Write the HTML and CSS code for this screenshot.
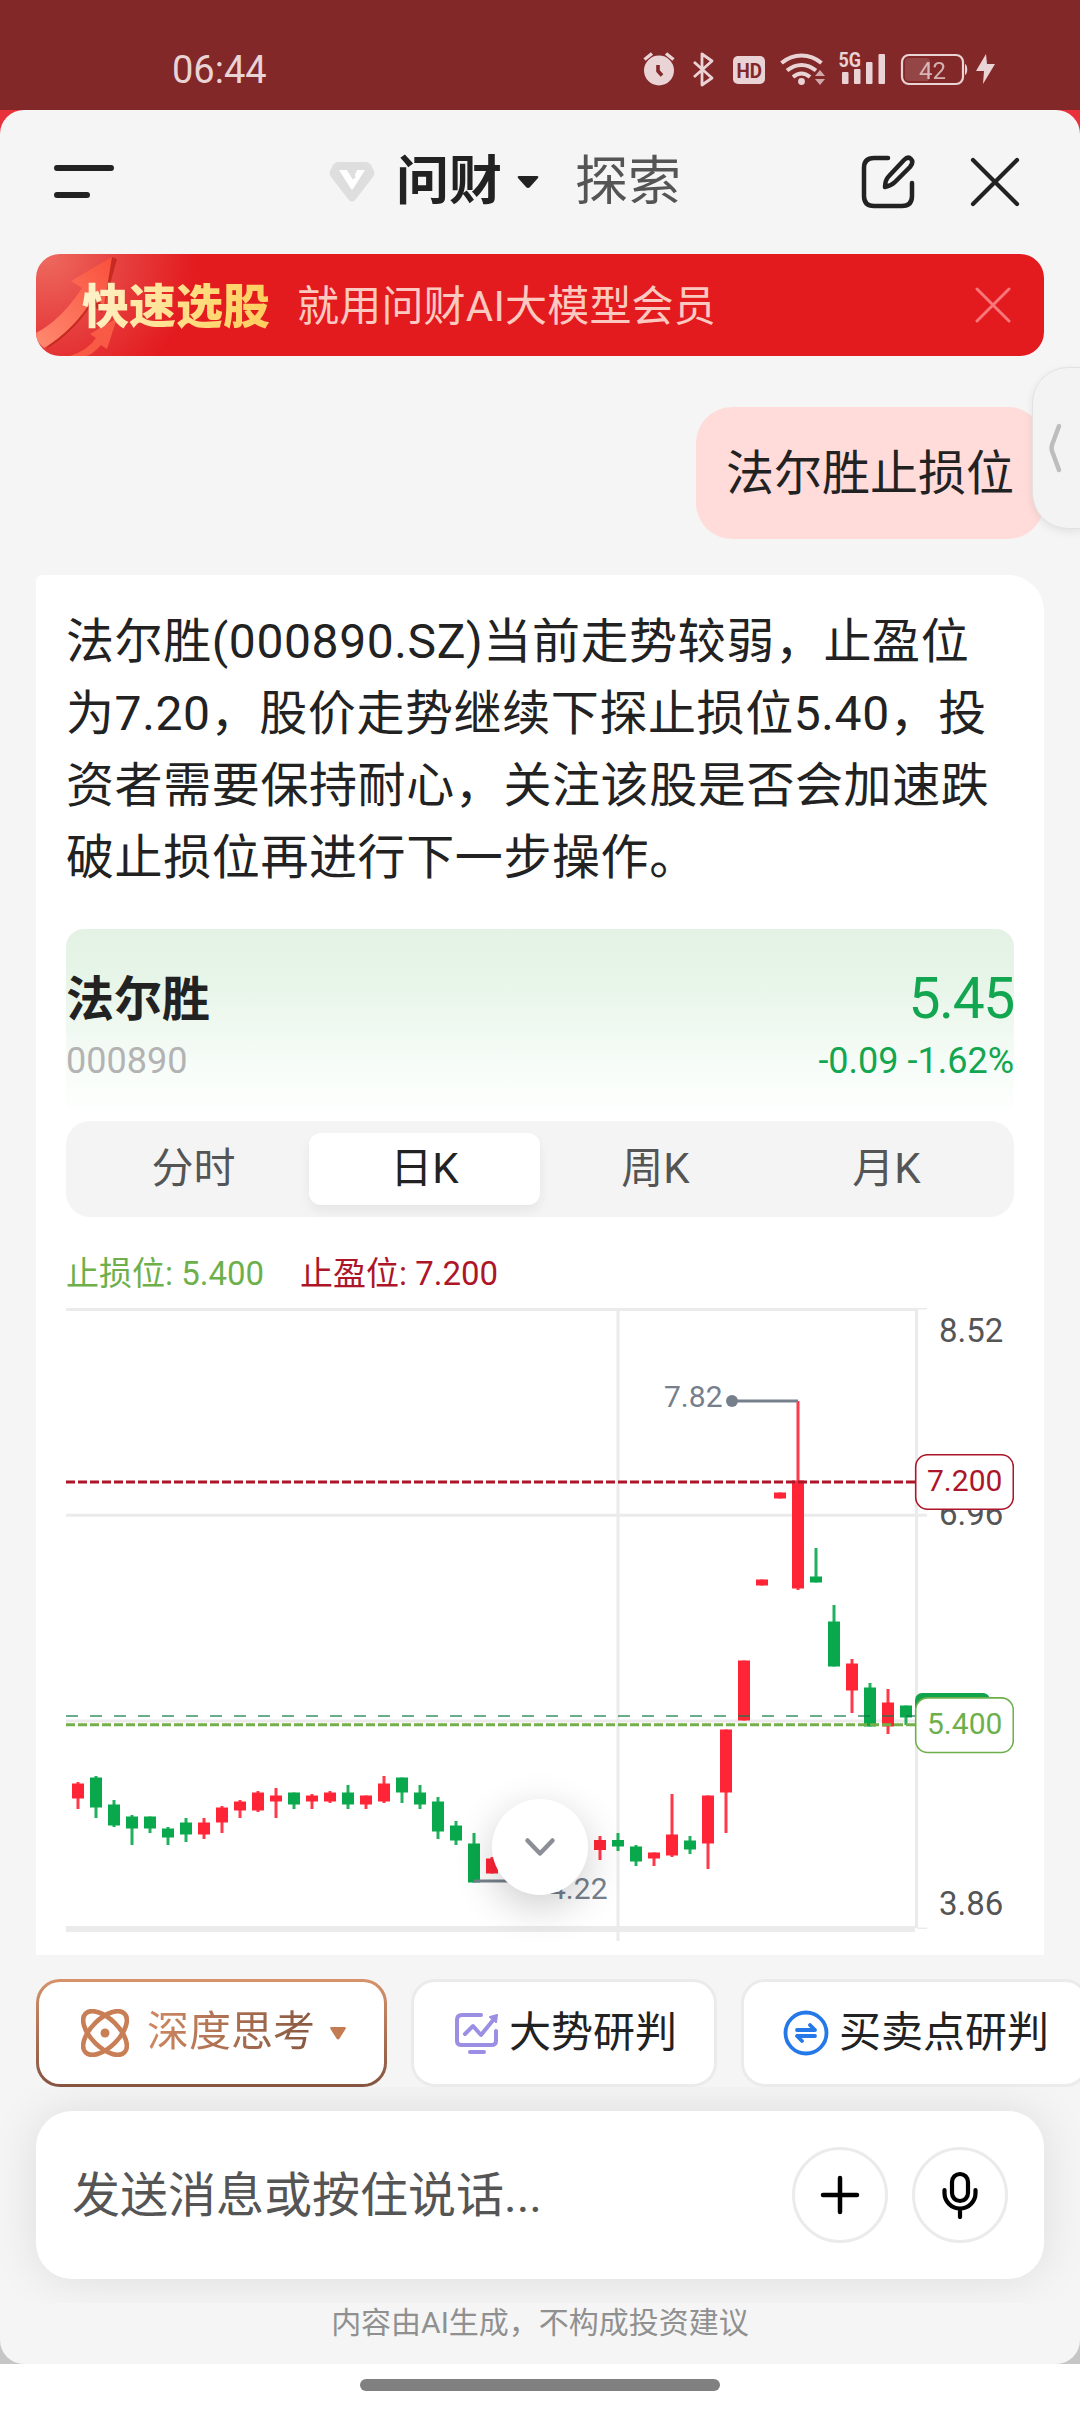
FILE: index.html
```html
<!DOCTYPE html>
<html lang="zh-CN">
<head>
  <meta charset="UTF-8" />
  <title>问财</title>
  <link rel="stylesheet" href="styles.css">
</head>
<body>
  <header class="status-bar">
    <span class="time">06:44</span>
    <!-- alarm, bluetooth, HD, wifi, 5G, battery, charging -->
    <svg class="status-icons" viewBox="640 48 360 40" width="360" height="40">
      <g fill="#ead3d4">
        <circle cx="659" cy="70.500" r="15" />
        <path d="M658 65v6l4 4.500" stroke="#822828" stroke-width="3.600" fill="none" />
        <path d="M644.500 59.500l7.500-6M673.500 59.500l-7.500-6" stroke="#ead3d4" stroke-width="3.400" />
        <path d="M694 62l18 16-10 7V54l10 7-18 16" stroke="#ead3d4" stroke-width="2.800" fill="none" stroke-linejoin="round" />
        <rect x="733" y="56" width="32" height="28" rx="5" />
        <path d="M781.500 63c12-10 28-10 40 0M787 70.500c9-7.500 20-7.500 29 0M793 77c5.500-4.500 11.500-4.500 17 0" stroke="#ead3d4" stroke-width="4" fill="none" />
        <circle cx="801.500" cy="81.500" r="3.400" />
        <path d="M815 76l5-6 5 6zM815 79l5 6 5-6z" opacity=".75" />
        <rect x="842" y="72" width="6.500" height="12" rx="1" />
        <rect x="854" y="69" width="6.500" height="15" rx="1" />
        <rect x="866" y="62" width="6.500" height="22" rx="1" />
        <rect x="878.500" y="54" width="6.500" height="30" rx="1" />
        <rect x="905" y="58" width="25" height="23" rx="4" opacity=".18" />
        <rect x="902" y="55" width="61" height="29" rx="7" fill="none" stroke="#ead3d4" stroke-width="2.200" />
        <path d="M965 64c3 1 3 10 0 11z" />
        <path d="M986 54l-10 17h8l-1 13 12-20h-8z" />
        <text x="838.500" y="67" class="net" textLength="22.500" lengthAdjust="spacingAndGlyphs">5G</text>
        <text x="919" y="79" class="battery">42</text>
      </g>
      <text x="736.500" y="78" class="hd" textLength="25.500" lengthAdjust="spacingAndGlyphs">HD</text>
    </svg>
  </header>

  <main class="panel">
    <nav class="top-nav">
      <svg class="menu" width="60" height="36" viewBox="0 0 60 36" stroke="#222" stroke-width="6" stroke-linecap="round">
        <path d="M3 4h54M3 31h30" />
      </svg>
      <div class="nav-tabs">
        <svg width="46" height="40" viewBox="0 0 46 40">
          <path d="M9 0h28q3 0 5 3l3 6q1 3-1 6L27 37q-4 5-8 0L2 15q-2-3-1-6l3-6q2-3 5-3z" fill="#dedede" />
          <path d="M10 8h8l6 10 4-10h8L24 27q-1 1-2 0z" fill="#fff" />
          <path d="M21 8l5 8" stroke="#dedede" stroke-width="2" />
        </svg>
        <span class="nav-current">问财</span>
        <svg class="nav-caret" width="22" height="14" viewBox="0 0 22 14"><path d="M2 1h18q2 0 1 2L13 12q-2 2-4 0L1 3Q0 1 2 1z" fill="#222" /></svg>
        <span class="nav-other">探索</span>
      </div>
      <svg class="edit" width="56" height="56" viewBox="0 0 56 56" fill="none" stroke="#222" stroke-width="4.500" stroke-linecap="round" stroke-linejoin="round">
        <path d="M28 4H14Q4 4 4 14v28q0 10 10 10h28q10 0 10-10V29" />
        <path d="M25 33c0-5 1-8 4-11L44 6q4-4 7-1t-1 8L35 28c-3 3-5 4-10 5z" />
      </svg>
      <svg class="close" width="50" height="50" viewBox="0 0 50 50" stroke="#222" stroke-width="4.200" stroke-linecap="round">
        <path d="M3 3l44 44M47 3L3 47" />
      </svg>
    </nav>

    <section class="banner">
      <svg class="banner-arrow" width="110" height="102" viewBox="0 0 110 102">
        <defs>
          <linearGradient id="arrow" x1="0" y1="1" x2="1" y2="0">
            <stop offset="0" stop-color="#ff8a70" />
            <stop offset="1" stop-color="#f9503c" />
          </linearGradient>
        </defs>
        <path d="M10 95Q36 80 56 50l10 9 15-54-5-2z" fill="#c62a20" />
        <path d="M0 79Q25 66 46 34L35 27 76 3 68 52 58 43Q38 76 8 94L0 86z" fill="url(#arrow)" />
        <path d="M34 102Q52 96 60 84l-6-4 27-16-10 31-6-4Q56 101 50 102z" fill="#f95a45" />
      </svg>
      <strong class="banner-title">快速选股</strong>
      <span class="banner-text">就用问财AI大模型会员</span>
      <svg class="banner-close" width="36" height="36" viewBox="0 0 36 36" stroke="#f8777a" stroke-width="3" stroke-linecap="round">
        <path d="M2 2l32 32M34 2L2 34" />
      </svg>
    </section>

    <div class="question">法尔胜止损位</div>

    <article class="answer">
      <p class="answer-text">法尔胜(000890.SZ)当前走势较弱，止盈位<br>为7.20，股价走势继续下探止损位5.40，投<br>资者需要保持耐心，关注该股是否会加速跌<br>破止损位再进行下一步操作。</p>

      <div class="stock">
        <div class="stock-row">
          <strong class="stock-name">法尔胜</strong>
          <span class="stock-price">5.45</span>
        </div>
        <div class="stock-row">
          <span class="stock-code">000890</span>
          <span class="stock-change">-0.09 -1.62%</span>
        </div>
      </div>

      <div class="periods">
        <span>分时</span>
        <span class="active">日K</span>
        <span>周K</span>
        <span>月K</span>
      </div>

      <div class="legend">
        <span class="loss">止损位: 5.400</span>
        <span class="profit">止盈位: 7.200</span>
      </div>

      <svg class="chart" viewBox="66 1300 948 655" width="948" height="655">
        <g stroke="#ebebeb" stroke-width="3">
          <path d="M66 1309.500H917M66 1515.200H927M66 1721H915M618 1309V1941M916.500 1309V1928" />
          <path d="M917 1308.700H927M917 1928.300H927" stroke-width="1.500" />
          <path d="M66 1929H915" stroke-width="6" />
        </g>
        <g id="candles"></g>
        <g stroke-width="3" fill="none">
          <path d="M66 1482H915" stroke="#ad1529" stroke-dasharray="9 3" />
          <path d="M66 1716H915" stroke="#0b7a45" stroke-opacity=".62" stroke-width="2" stroke-dasharray="12 12" />
          <path d="M66 1724.800H915" stroke="#74b04a" stroke-dasharray="9 3" />
          <path d="M732 1401H798M474 1881H540" stroke="#76808c" />
        </g>
        <circle cx="732" cy="1401" r="6" fill="#76808c" />
        <g class="mark">
          <text x="664" y="1407">7.82</text>
          <text x="549" y="1899">4.22</text>
        </g>
        <g class="axis">
          <text x="939" y="1342">8.52</text>
          <text x="939" y="1525">6.96</text>
          <text x="939" y="1915">3.86</text>
        </g>
        <rect x="915" y="1693" width="75" height="46" rx="7" fill="#0fa44c" />
        <g class="tag tag-profit">
          <rect x="915.700" y="1454.700" width="97.600" height="54.600" rx="12" />
          <text x="927" y="1491">7.200</text>
        </g>
        <g class="tag tag-loss">
          <rect x="915.700" y="1697.900" width="97.600" height="54.600" rx="12" />
          <text x="927" y="1734">5.400</text>
        </g>
      </svg>

      <button class="scroll-down">
        <svg width="32" height="20" viewBox="0 0 32 20" fill="none" stroke="#8d8f98" stroke-width="4.500" stroke-linecap="round" stroke-linejoin="round"><path d="M3.500 3.500L16 16.500 28.500 3.500" /></svg>
      </button>
    </article>

    <div class="chips">
      <div class="chip chip-think">
        <svg width="48" height="48" viewBox="0 0 48 48" fill="none" stroke="#c97f56" stroke-width="4.600">
          <ellipse cx="24" cy="24" rx="27.500" ry="14" transform="rotate(45 24 24)" />
          <ellipse cx="24" cy="24" rx="27.500" ry="14" transform="rotate(-45 24 24)" />
          <circle cx="24" cy="24" r="4.500" fill="#c97f56" stroke="none" />
        </svg>
        <span class="think-label">深度思考</span>
        <svg class="chip-caret" width="16" height="13" viewBox="0 0 16 13"><path d="M1.500 0h13q2 0 1 2L9.500 11.500q-1.500 2-3 0L.5 2q-1-2 1-2z" fill="#c47a53" /></svg>
      </div>
      <div class="chip">
        <svg width="48" height="48" viewBox="0 0 48 48" fill="none" stroke="#9a8fe3" stroke-width="4" stroke-linejoin="round" stroke-linecap="round">
          <path d="M29 6H10Q5 6 5 11v21q0 4 5 4h29q5 0 5-4V22M18 43h14" />
          <path d="M13 25l8-8 8 9L42 10" />
          <path d="M38 8l7-2-1 7z" fill="#9a8fe3" stroke-width="2" />
        </svg>
        <span>大势研判</span>
      </div>
      <div class="chip">
        <svg width="48" height="48" viewBox="0 0 48 48" fill="none" stroke="#2478e8" stroke-width="3.800" stroke-linecap="round" stroke-linejoin="round">
          <circle cx="24" cy="24" r="20.500" />
          <path d="M15 21h18l-5-5M33 27H15l5 5" />
        </svg>
        <span>买卖点研判</span>
      </div>
    </div>

    <div class="composer-area">
      <div class="composer">
        <span class="placeholder">发送消息或按住说话...</span>
        <button class="round">
          <svg width="40" height="40" viewBox="0 0 40 40" stroke="#000" stroke-width="4.500" stroke-linecap="round"><path d="M20 3v34M3 20h34" /></svg>
        </button>
        <button class="round">
          <svg width="38" height="48" viewBox="0 0 38 48" fill="none" stroke="#000" stroke-width="4.200" stroke-linecap="round">
            <rect x="11" y="3" width="16" height="27" rx="8" />
            <path d="M3.500 19v3a15.500 15.500 0 0 0 31 0v-3M19 38v8" />
          </svg>
        </button>
      </div>
    </div>
    <p class="disclaimer">内容由AI生成，不构成投资建议</p>

    <div class="side-tab">
      <svg width="14" height="50" viewBox="0 0 14 50" fill="none" stroke="#bdbdbd" stroke-width="4.500" stroke-linecap="round" stroke-linejoin="round"><path d="M11 3L4 22q-1 3 0 6l7 19" /></svg>
    </div>
  </main>

  <footer class="home-bar"><i></i></footer>

  <script>
    // index, color, high, body top, body bottom, low
    const candles = [
      [0, "r", 1782, 1783.5, 1798.5, 1809],
      [1, "g", 1776, 1777.5, 1807.5, 1818],
      [2, "g", 1800, 1804.5, 1825.5, 1827],
      [3, "g", 1815, 1816.5, 1828.5, 1845],
      [4, "g", 1816.5, 1816.5, 1828.5, 1833],
      [5, "g", 1827, 1828.5, 1837.5, 1845],
      [6, "g", 1818, 1822.5, 1834.5, 1842],
      [7, "r", 1818, 1822.5, 1834.5, 1839],
      [8, "r", 1806, 1807.5, 1822.5, 1833],
      [9, "r", 1800, 1801.5, 1810.5, 1818],
      [10, "r", 1791, 1792.5, 1810.5, 1812],
      [11, "r", 1788, 1795.5, 1801.5, 1818],
      [12, "g", 1792.5, 1792.5, 1804.5, 1809],
      [13, "r", 1794, 1795.5, 1801.5, 1809],
      [14, "r", 1791, 1792.5, 1801.5, 1803],
      [15, "g", 1785, 1792.5, 1804.5, 1809],
      [16, "r", 1795.5, 1795.5, 1804.5, 1809],
      [17, "r", 1776, 1783.5, 1801.5, 1803],
      [18, "g", 1777.5, 1777.5, 1792.5, 1803],
      [19, "g", 1785, 1792.5, 1804.5, 1809],
      [20, "g", 1797, 1801.5, 1831.5, 1839],
      [21, "g", 1821, 1825.5, 1840.5, 1845],
      [22, "g", 1833, 1843.5, 1882.5, 1882.5],
      [23, "r", 1857, 1858.5, 1873.5, 1873.5],
      [29, "r", 1836, 1840, 1850, 1860],
      [30, "g", 1833, 1840, 1846.5, 1851],
      [31, "g", 1845, 1846.5, 1861.5, 1866],
      [32, "r", 1852.5, 1852.5, 1858.5, 1866],
      [33, "r", 1794, 1834.5, 1855.5, 1857],
      [34, "g", 1836, 1840.5, 1849.5, 1854],
      [35, "r", 1795.5, 1795.5, 1843.5, 1869],
      [36, "r", 1729.5, 1729.5, 1792.5, 1833],
      [37, "r", 1660.5, 1660.5, 1720.5, 1720.5],
      [38, "r", 1579.5, 1579.5, 1585.5, 1585.5],
      [39, "r", 1492.5, 1492.5, 1498.5, 1498.5],
      [40, "r", 1401, 1480.5, 1588.5, 1590],
      [41, "g", 1548, 1576.5, 1582.5, 1582.5],
      [42, "g", 1605, 1621.5, 1666.5, 1666.5],
      [43, "r", 1659, 1663.5, 1690.5, 1713],
      [44, "g", 1683, 1687.5, 1726.5, 1726.5],
      [45, "r", 1689, 1702.5, 1726.5, 1734],
      [46, "g", 1705.5, 1705.5, 1717.5, 1725]
    ];

    document.getElementById("candles").innerHTML = candles.map(([i, c, high, top, bottom, low]) => {
      const x = 78 + i * 18;
      return `<g class="candle-${c}"><rect x="${x - 1.5}" y="${high}" width="3" height="${low - high}" opacity=".9" />` +
        `<rect x="${x - 6}" y="${top}" width="12" height="${bottom - top}" /></g>`;
    }).join("");
  </script>
</body>
</html>
```
FILE: styles.css
```css
:root {
  --text: #222;
  --muted: #555;
  --line: #ebebeb;
  --page: #f5f5f5;
  --up: #ff2436;
  --down: #09a84c;
  --loss: #6db04b;
  --profit: #ad1529;
}

* {
  box-sizing: border-box;
  margin: 0;
  padding: 0;
}

body {
  width: 1080px;
  height: 2412px;
  overflow: hidden;
  background: linear-gradient(#e8313a 50%, #c6c6c6 50%);
  color: var(--text);
  font-family: Roboto, "Noto Sans CJK SC", sans-serif;
}

svg {
  display: block;
  flex: none;
}

button {
  border: none;
  background: #fff;
}

.status-bar {
  display: flex;
  align-items: center;
  justify-content: space-between;
  height: 110px;
  padding: 26px 80px 0 172px;
  background: #822828;
  color: #ead3d4;
}

.time {
  padding-top: 3px;
  font-size: 38px;
  line-height: 40px;
}

.net {
  font-size: 21px;
  font-weight: 700;
}

.battery {
  font-size: 24px;
  opacity: .8;
}

.hd {
  font-size: 21px;
  font-weight: 700;
  fill: #822828;
}

.panel {
  position: relative;
  display: flex;
  flex-direction: column;
  height: 2254px;
  overflow: hidden;
  border-radius: 24px;
  background: var(--page);
}

/* top */
.top-nav {
  display: flex;
  align-items: center;
  height: 144px;
  padding: 0 60px 0 54px;
}

.nav-tabs {
  display: flex;
  align-items: center;
  margin: 0 auto 0 215px;
  font-size: 53px;
  line-height: 60px;
}

.nav-current {
  margin-left: 21px;
  font-weight: 700;
}

.nav-caret {
  margin: 0 36px 0 15px;
}

.nav-other {
  color: var(--muted);
}

.edit {
  margin-right: 54px;
}

.banner {
  position: relative;
  display: flex;
  align-items: center;
  height: 102px;
  margin: 0 36px;
  padding: 0 33px 0 46px;
  overflow: hidden;
  border-radius: 24px;
  background: radial-gradient(circle at 10px 0, #ee6a60, #e6403f 75px, #e31b1f 150px);
}

.banner-arrow {
  position: absolute;
  left: 0;
  top: 0;
}

.banner-title {
  position: relative;
  padding-bottom: 5px;
  font-size: 47px;
  font-weight: 900;
  background: linear-gradient(100deg, #fff3cf, #ffd873 70%, #ffcb5c);
  -webkit-background-clip: text;
  background-clip: text;
  color: transparent;
}

.banner-text {
  margin: 0 auto 0 27px;
  padding-bottom: 6px;
  color: #fbc9c0;
  font-size: 42px;
  letter-spacing: .2px;
}

.question {
  align-self: flex-end;
  height: 132px;
  margin: 51px 36px 36px 0;
  padding: 0 30px;
  border-radius: 36px;
  background: #ffdcda;
  font-size: 48px;
  line-height: 133px;
}

/* answer card */
.answer {
  position: relative;
  height: 1380px;
  margin: 0 36px;
  padding: 31px 30px 0;
  border-radius: 6px 36px 0 0;
  background: #fff;
}

.answer-text {
  height: 323px;
  font-size: 48px;
  line-height: 72px;
  letter-spacing: .6px;
  white-space: nowrap;
}

.stock {
  height: 192px;
  padding-top: 36px;
  border-radius: 18px;
  background: linear-gradient(#e3f2e4, #e8f5e9 30%, #f8fdf9 75%, #fff);
}

.stock-row {
  display: flex;
  align-items: center;
  justify-content: space-between;
  height: 66px;
  font-size: 36px;
}

.stock-row + .stock-row {
  height: 60px;
}

.stock-name {
  padding-bottom: 7px;
  font-size: 48px;
}

.stock-price {
  color: #13a650;
  font-size: 57px;
  letter-spacing: -1.4px;
}

.stock-code {
  color: #b3b3b3;
}

.stock-change {
  color: #13a650;
}

.periods {
  display: grid;
  grid-template-columns: repeat(4, 1fr);
  height: 96px;
  padding: 12px;
  border-radius: 24px;
  background: #f4f4f4;
  color: var(--muted);
  font-size: 42px;
  line-height: 72px;
  text-align: center;
}

.periods .active {
  border-radius: 12px;
  background: #fff;
  box-shadow: 0 6px 12px rgba(0, 0, 0, .06);
  color: var(--text);
}

.legend {
  display: flex;
  gap: 36px;
  height: 83px;
  padding-top: 35px;
  font-size: 33px;
  line-height: 44px;
}

.legend .loss {
  color: var(--loss);
}

.legend .profit {
  color: var(--profit);
}

.chart text {
  font-family: Roboto, sans-serif;
}

.candle-r {
  fill: var(--up);
}

.candle-g {
  fill: var(--down);
}

.mark {
  fill: #76808c;
  font-size: 30px;
}

.axis {
  fill: var(--muted);
  font-size: 33px;
}

.tag {
  font-size: 30px;
}

.tag rect {
  fill: #fff;
  stroke-width: 1.6px;
}

.tag-profit {
  fill: var(--profit);
}

.tag-profit rect {
  stroke: var(--profit);
}

.tag-loss {
  fill: var(--loss);
}

.tag-loss rect {
  stroke: var(--loss);
}

.scroll-down {
  position: absolute;
  left: 456px;
  bottom: 60px;
  display: flex;
  align-items: center;
  justify-content: center;
  width: 96px;
  height: 96px;
  border-radius: 50%;
  box-shadow: 0 12px 42px rgba(0, 0, 0, .2);
}

/* bottom */
.chips {
  display: flex;
  gap: 24px;
  height: 132px;
  padding: 24px 0 0 36px;
}

.chip {
  display: flex;
  flex: none;
  align-items: center;
  gap: 9px;
  height: 108px;
  padding: 0 37px 0 38px;
  border: 3px solid var(--line);
  border-radius: 24px;
  background: #fff;
  font-size: 42px;
  line-height: 60px;
}

.chip-think {
  gap: 18px;
  width: 351px;
  padding: 0 0 0 42px;
  border-color: transparent;
  background: linear-gradient(#fff, #fff) padding-box, linear-gradient(#d6936b, #845440) border-box;
}

.think-label {
  padding-bottom: 2px;
  background: linear-gradient(100deg, #d08a63, #85553f);
  -webkit-background-clip: text;
  background-clip: text;
  color: transparent;
}

.chip-caret {
  margin-left: -3px;
}

.composer-area {
  height: 216px;
  padding: 24px 36px;
  overflow: hidden;
}

.composer {
  display: flex;
  align-items: center;
  gap: 24px;
  height: 168px;
  padding: 0 36px;
  border-radius: 36px;
  background: #fff;
  box-shadow: 0 0 48px rgba(0, 0, 0, .1);
}

.placeholder {
  flex: 1;
  padding-top: 2px;
  color: var(--muted);
  font-size: 48px;
  line-height: 60px;
}

.round {
  display: flex;
  align-items: center;
  justify-content: center;
  width: 96px;
  height: 96px;
  border: 3px solid var(--line);
  border-radius: 50%;
}

.disclaimer {
  padding-top: 2px;
  color: #909090;
  font-size: 30px;
  line-height: 36px;
  text-align: center;
}

.side-tab {
  position: absolute;
  top: 257px;
  right: -2px;
  display: flex;
  align-items: center;
  width: 50px;
  height: 162px;
  padding-left: 15px;
  border: 1.5px solid #e2e2e2;
  border-radius: 36px 0 0 36px;
  background: #f3f3f3;
  box-shadow: 0 3px 8px rgba(0, 0, 0, .08);
}

.home-bar {
  display: flex;
  justify-content: center;
  height: 48px;
  padding-top: 15px;
  background: #fff;
}

.home-bar i {
  width: 360px;
  height: 12px;
  border-radius: 6px;
  background: #808080;
}
```
